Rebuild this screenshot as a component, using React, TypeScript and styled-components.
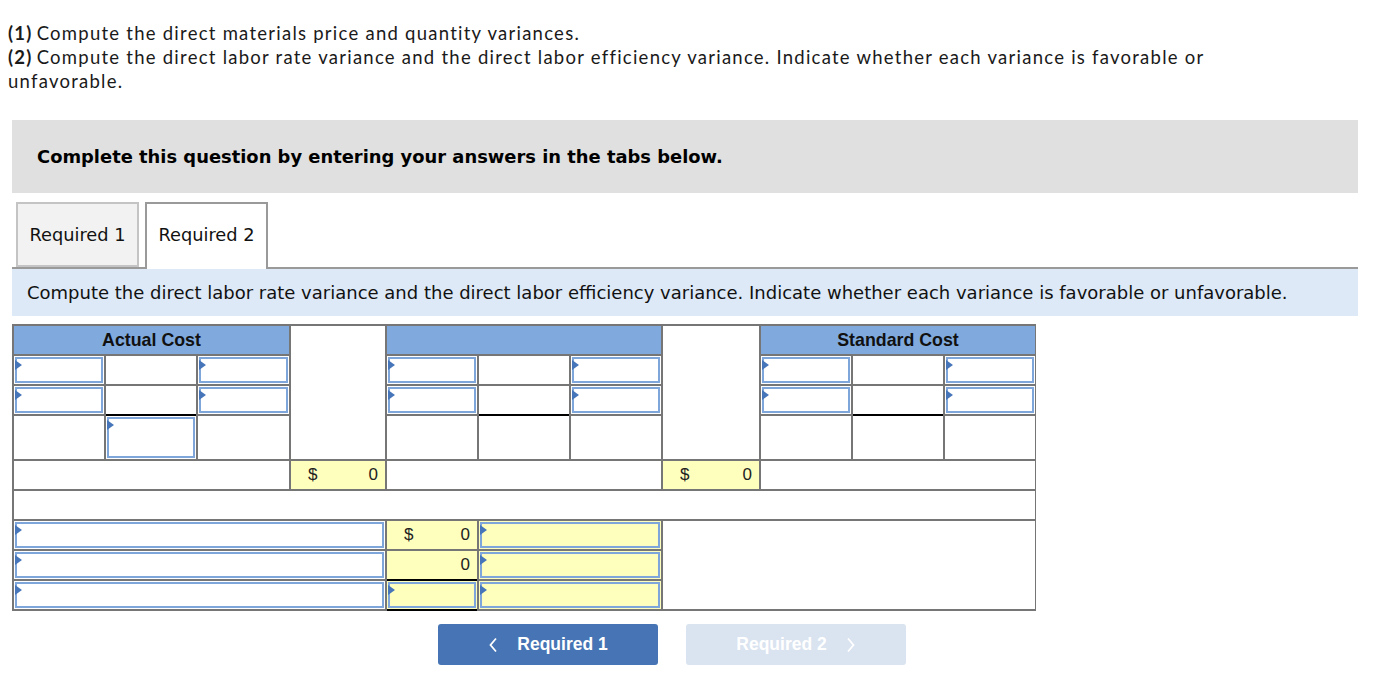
import React from 'react';
import styled, { createGlobalStyle } from 'styled-components';

const GlobalStyle = createGlobalStyle`
  html, body {
    margin: 0;
    padding: 0;
    background: #ffffff;
  }
  body {
    font-family: "Open Sans", "Liberation Sans", sans-serif;
    color: #111;
  }
`;

const Page = styled.div`
  width: 1384px;
  height: 696px;
  overflow: hidden;
`;

const Prompt = styled.div`
  padding: 21px 8px 0 8px;
  width: 1230px;
`;

const PromptLine = styled.p`
  margin: 0;
  font-family: Lato, "Open Sans", sans-serif;
  font-size: 18.5px;
  letter-spacing: 1.25px;
  line-height: 24px;
  color: #1a1a1a;

  b {
    font-weight: 700;
    margin-right: 4px;
  }
`;

const Section = styled.div`
  margin: 27px 26px 0 12px;
`;

const Banner = styled.div`
  height: 73px;
  background: #e0e0e0;
  display: flex;
  align-items: center;
  padding-left: 25px;
  font-family: "DejaVu Sans", Verdana, sans-serif;
  font-weight: 700;
  font-size: 17.9px;
  color: #000;
`;

const TabBar = styled.div`
  margin-top: 9px;
  display: flex;
  gap: 6px;
  padding-left: 4px;
  border-bottom: 2px solid #9a9a9a;
  height: 65px;
`;

const Tab = styled.div<{ $active?: boolean }>`
  box-sizing: border-box;
  width: 123px;
  height: ${(p) => (p.$active ? 67 : 65)}px;
  display: flex;
  align-items: center;
  justify-content: center;
  font-family: "DejaVu Sans", Verdana, sans-serif;
  font-size: 17.8px;
  color: #111;
  background: ${(p) => (p.$active ? '#ffffff' : '#f2f2f2')};
  border: 2px solid ${(p) => (p.$active ? '#9a9a9a' : '#c4c4c4')};
  border-bottom: ${(p) => (p.$active ? 'none' : '2px solid #c4c4c4')};
  padding-bottom: ${(p) => (p.$active ? 4 : 0)}px;
  position: relative;
  z-index: 1;
`;

const Instruction = styled.div`
  height: 47px;
  background: #dde9f6;
  display: flex;
  align-items: center;
  padding-left: 15px;
  font-family: "DejaVu Sans", Verdana, sans-serif;
  font-size: 18px;
  color: #111;
  white-space: nowrap;
`;

const Grid = styled.div`
  margin-top: 8px;
  width: 1024px;
  box-sizing: border-box;
  display: grid;
  grid-template-columns: 90px 90px 91px 94px 90px 90px 90px 96px 90px 90px 90px;
  grid-template-rows: 28px 28px 28px 43px 28px 28px 28px 28px 28px;
  gap: 2px;
  padding: 2px;
  background: #767676;
`;

const Cell = styled.div<{
  $col: string;
  $row: string;
  $bg?: 'white' | 'blue' | 'yellow';
  $rule?: 'top' | 'both';
}>`
  grid-column: ${(p) => p.$col};
  grid-row: ${(p) => p.$row};
  background: ${(p) =>
    p.$bg === 'blue' ? '#80aadd' : p.$bg === 'yellow' ? '#ffffbd' : '#ffffff'};
  box-shadow: ${(p) =>
    p.$rule === 'top'
      ? '0 -2px 0 #000'
      : p.$rule === 'both'
      ? '0 -2px 0 #000, 0 2px 0 #000'
      : 'none'};
  position: relative;
  display: flex;
  align-items: center;
  justify-content: center;
  font-family: "Liberation Sans", Arial, sans-serif;
  font-size: 16.5px;
  color: #111;
`;

const HeaderText = styled.span`
  font-weight: 700;
  font-size: 17.8px;
`;

const Amount = styled.div`
  width: 100%;
  box-sizing: border-box;
  display: flex;
  justify-content: space-between;
  padding: 0 7px 0 17px;
  font-family: "Liberation Sans", Arial, sans-serif;
  font-size: 17px;
  color: #222;
`;

const Field = styled.div<{ $yellow?: boolean }>`
  position: absolute;
  inset: 1px;
  box-sizing: border-box;
  border: 2px solid #7ea6db;
  box-shadow: inset 0 0 0 1px ${(p) => (p.$yellow ? '#fdfbc0' : '#ffffff')};
  background: ${(p) => (p.$yellow ? '#ffffbd' : '#ffffff')};

  &::before {
    content: '';
    position: absolute;
    left: -2px;
    top: 1px;
    border-top: 5px solid transparent;
    border-bottom: 5px solid transparent;
    border-left: 7px solid #4676b9;
  }
`;

const Nav = styled.div`
  margin-top: 13px;
  padding-left: 426px;
  display: flex;
  gap: 28px;
`;

const NavButton = styled.button<{ $disabled?: boolean }>`
  width: 220px;
  height: 41px;
  border: none;
  border-radius: 3px;
  background: ${(p) => (p.$disabled ? '#dae3f0' : '#4674b4')};
  color: #ffffff;
  display: flex;
  align-items: center;
  justify-content: center;
  gap: 19px;
  font-family: "Liberation Sans", Arial, sans-serif;
  font-weight: 700;
  font-size: 17.5px;
  cursor: ${(p) => (p.$disabled ? 'default' : 'pointer')};
  padding: 0;
`;

const Chevron = ({ dir }: { dir: 'left' | 'right' }) => (
  <svg width="10" height="16" viewBox="0 0 10 16">
    <polyline
      points={dir === 'left' ? '8,1.5 2.5,8 8,14.5' : '2,1.5 7.5,8 2,14.5'}
      fill="none"
      stroke="#ffffff"
      strokeWidth="1.8"
    />
  </svg>
);

const groupStarts = [1, 5, 9];

export default function App() {
  const cells: React.ReactNode[] = [];

  // header row
  cells.push(
    <Cell key="h1" $col="1 / 4" $row="1" $bg="blue">
      <HeaderText>Actual Cost</HeaderText>
    </Cell>,
    <Cell key="h2" $col="4" $row="1 / 5" />,
    <Cell key="h3" $col="5 / 8" $row="1" $bg="blue" />,
    <Cell key="h4" $col="8" $row="1 / 5" />,
    <Cell key="h5" $col="9 / 12" $row="1" $bg="blue">
      <HeaderText>Standard Cost</HeaderText>
    </Cell>
  );

  groupStarts.forEach((start, g) => {
    [2, 3].forEach((row) => {
      cells.push(
        <Cell key={`a${g}${row}`} $col={`${start}`} $row={`${row}`}>
          <Field />
        </Cell>,
        <Cell key={`b${g}${row}`} $col={`${start + 1}`} $row={`${row}`} />,
        <Cell key={`c${g}${row}`} $col={`${start + 2}`} $row={`${row}`}>
          <Field />
        </Cell>
      );
    });
    cells.push(
      <Cell key={`d${g}`} $col={`${start}`} $row="4" />,
      <Cell key={`e${g}`} $col={`${start + 1}`} $row="4" $rule="top">
        {g === 0 && <Field />}
      </Cell>,
      <Cell key={`f${g}`} $col={`${start + 2}`} $row="4" />
    );
  });

  // totals row
  cells.push(
    <Cell key="t1" $col="1 / 4" $row="5" />,
    <Cell key="t2" $col="4" $row="5" $bg="yellow">
      <Amount>
        <span>$</span>
        <span>0</span>
      </Amount>
    </Cell>,
    <Cell key="t3" $col="5 / 8" $row="5" />,
    <Cell key="t4" $col="8" $row="5" $bg="yellow">
      <Amount>
        <span>$</span>
        <span>0</span>
      </Amount>
    </Cell>,
    <Cell key="t5" $col="9 / 12" $row="5" />,
    <Cell key="blank" $col="1 / 12" $row="6" />
  );

  // variance rows
  cells.push(
    <Cell key="v1a" $col="1 / 5" $row="7">
      <Field />
    </Cell>,
    <Cell key="v1b" $col="5" $row="7" $bg="yellow">
      <Amount>
        <span>$</span>
        <span>0</span>
      </Amount>
    </Cell>,
    <Cell key="v1c" $col="6 / 8" $row="7" $bg="yellow">
      <Field $yellow />
    </Cell>,
    <Cell key="v2a" $col="1 / 5" $row="8">
      <Field />
    </Cell>,
    <Cell key="v2b" $col="5" $row="8" $bg="yellow">
      <Amount>
        <span />
        <span>0</span>
      </Amount>
    </Cell>,
    <Cell key="v2c" $col="6 / 8" $row="8" $bg="yellow">
      <Field $yellow />
    </Cell>,
    <Cell key="v3a" $col="1 / 5" $row="9">
      <Field />
    </Cell>,
    <Cell key="v3b" $col="5" $row="9" $bg="yellow" $rule="both">
      <Field $yellow />
    </Cell>,
    <Cell key="v3c" $col="6 / 8" $row="9" $bg="yellow">
      <Field $yellow />
    </Cell>,
    <Cell key="rest" $col="8 / 12" $row="7 / 10" />
  );

  return (
    <Page>
      <GlobalStyle />
      <Prompt>
        <PromptLine>
          <b>(1)</b>Compute the direct materials price and quantity variances.
        </PromptLine>
        <PromptLine>
          <b>(2)</b>
          <span>
            Compute the direct labor rate variance and the direct labor efficiency variance.
            Indicate whether each variance is favorable or
          </span>
        </PromptLine>
        <PromptLine>unfavorable.</PromptLine>
      </Prompt>
      <Section>
        <Banner>Complete this question by entering your answers in the tabs below.</Banner>
        <TabBar>
          <Tab>Required 1</Tab>
          <Tab $active>Required 2</Tab>
        </TabBar>
        <Instruction>
          Compute the direct labor rate variance and the direct labor efficiency variance.
          Indicate whether each variance is favorable or unfavorable.
        </Instruction>
        <Grid>{cells}</Grid>
        <Nav>
          <NavButton>
            <Chevron dir="left" />
            Required 1
          </NavButton>
          <NavButton $disabled>
            Required 2
            <Chevron dir="right" />
          </NavButton>
        </Nav>
      </Section>
    </Page>
  );
}
